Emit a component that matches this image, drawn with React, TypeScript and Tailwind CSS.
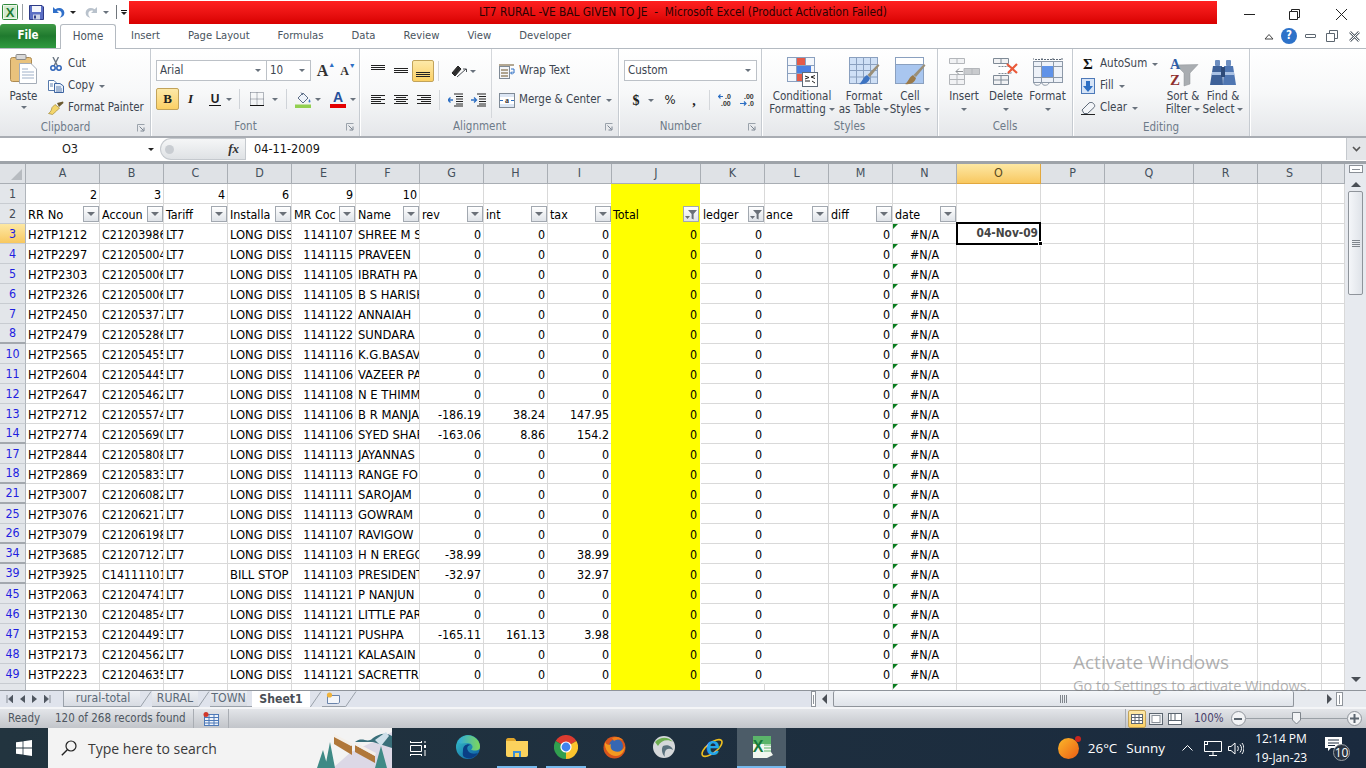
import type { ReactNode } from "react";

const GRID =
  "grid grid-cols-[26px_74px_64px_64px_64px_64px_64px_64px_64px_64px_89px_64px_64px_64px_64px_84px_64px_89px_64px_64px_23px]";

type Row = [number, string, string, string, string, string, string?, string?, string?];

const rows: Row[] = [
  [3, "H2TP1212", "C21203986", "LONG DISS", "1141107", "SHREE M S"],
  [4, "H2TP2297", "C21205004", "LONG DISS", "1141115", "PRAVEEN"],
  [5, "H2TP2303", "C21205006", "LONG DISS", "1141105", "IBRATH PA"],
  [6, "H2TP2326", "C21205006", "LONG DISS", "1141105", "B S HARISH"],
  [7, "H2TP2450", "C21205377", "LONG DISS", "1141122", "ANNAIAH"],
  [8, "H2TP2479", "C21205286", "LONG DISS", "1141122", "SUNDARA"],
  [10, "H2TP2565", "C21205455", "LONG DISS", "1141116", "K.G.BASAV"],
  [11, "H2TP2604", "C21205445", "LONG DISS", "1141106", "VAZEER PA"],
  [12, "H2TP2647", "C21205462", "LONG DISS", "1141108", "N E THIMM"],
  [13, "H2TP2712", "C21205574", "LONG DISS", "1141106", "B R MANJA", "-186.19", "38.24", "147.95"],
  [14, "H2TP2774", "C21205690", "LONG DISS", "1141106", "SYED SHAR", "-163.06", "8.86", "154.2"],
  [17, "H2TP2844", "C21205808", "LONG DISS", "1141113", "JAYANNAS"],
  [18, "H2TP2869", "C21205833", "LONG DISS", "1141113", "RANGE FO"],
  [21, "H2TP3007", "C21206082", "LONG DISS", "1141111", "SAROJAM"],
  [25, "H2TP3076", "C21206217", "LONG DISS", "1141113", "GOWRAM"],
  [26, "H2TP3079", "C21206198", "LONG DISS", "1141107", "RAVIGOW"],
  [34, "H2TP3685", "C21207127", "LONG DISS", "1141103", "H N EREGO", "-38.99", "0", "38.99"],
  [39, "H2TP3925", "C14111101", "BILL STOP", "1141103", "PRESIDENT", "-32.97", "0", "32.97"],
  [45, "H3TP2063", "C21204741", "LONG DISS", "1141121", "P NANJUN"],
  [46, "H3TP2130", "C21204854", "LONG DISS", "1141121", "LITTLE PAR"],
  [47, "H3TP2153", "C21204493", "LONG DISS", "1141121", "PUSHPA", "-165.11", "161.13", "3.98"],
  [48, "H3TP2173", "C21204562", "LONG DISS", "1141121", "KALASAIN"],
  [49, "H3TP2223", "C21204635", "LONG DISS", "1141121", "SACRETTR"],
];

const columns = ["A", "B", "C", "D", "E", "F", "G", "H", "I", "J", "K", "L", "M", "N", "O", "P", "Q", "R", "S", ""];

function Caret({ dark }: { dark?: boolean }) {
  return (
    <span
      className={
        dark
          ? "inline-block h-0 w-0 border-x-[3px] border-t-[3px] border-x-transparent border-t-[#222]"
          : "inline-block h-0 w-0 border-x-[3px] border-t-[3px] border-x-transparent border-t-[#69727d]"
      }
    />
  );
}

function Launcher() {
  return (
    <svg width="8" height="8" viewBox="0 0 8 8" className="shrink-0">
      <path d="M0.5 7.5V0.5H7.5" fill="none" stroke="#9aa2ab" />
      <path d="M2.5 2.5L6.5 6.5M7 3.5V7H3.5" fill="none" stroke="#7a8490" />
    </svg>
  );
}

function ExcelLogo({ size = 16 }: { size?: number }) {
  return (
    <svg width={size} height={size} viewBox="0 0 16 16">
      <rect x="0.5" y="0.5" width="15" height="15" rx="1" fill="#eef6ea" stroke="#2f8a3c" />
      <rect x="2" y="2" width="12" height="12" fill="#d3ead0" />
      <text x="8" y="13" textAnchor="middle" fontSize="13" fontWeight="700" fontFamily="Liberation Sans" fill="#1f7a32">X</text>
    </svg>
  );
}

function Save() {
  return (
    <svg width="15" height="15" viewBox="0 0 15 15">
      <path d="M0.5 0.5H13L14.5 2V14.5H0.5Z" fill="#5b6fc4" stroke="#2e3b86" />
      <rect x="3" y="1" width="9" height="6" fill="#f4f6fb" />
      <rect x="4" y="9.5" width="7" height="5" fill="#cdd3e6" />
      <rect x="5" y="10.5" width="2" height="3" fill="#2e3b86" />
    </svg>
  );
}

function UndoArrow({ color, flip }: { color: string; flip?: boolean }) {
  return (
    <svg width="13" height="13" viewBox="0 0 13 13" className={flip ? "-scale-x-100" : ""}>
      <path d="M1 1V7H7L4.8 4.9C6.6 3.8 9.2 4.6 9.6 7.2C9.9 9 9 10.6 7.6 11.6C10.7 11.4 12.6 9 12.3 6.2C11.9 2.5 7.4 0.6 3.3 3.3Z" fill={color} />
    </svg>
  );
}

function Paste() {
  return (
    <svg width="28" height="30" viewBox="0 0 28 30">
      <rect x="0.5" y="3.5" width="21" height="24" rx="2" fill="#e9c27c" stroke="#ad8a52" />
      <rect x="6" y="0.5" width="10" height="5" rx="1" fill="#d9d9d9" stroke="#8a8a8a" />
      <path d="M9.5 9.5H21L26.5 15V29.5H9.5Z" fill="#fff" stroke="#a5adb8" />
      <path d="M12 15H18M12 18H24M12 21H24M12 24H24" stroke="#9fb0c8" />
    </svg>
  );
}

function Scissors() {
  return (
    <svg width="12" height="14" viewBox="0 0 12 14">
      <path d="M3 0L7.5 9M8.5 0L4 9" stroke="#6b7683" strokeWidth="1.4" />
      <circle cx="3" cy="11" r="2.2" fill="none" stroke="#2d63b8" strokeWidth="1.5" />
      <circle cx="9" cy="11" r="2.2" fill="none" stroke="#2d63b8" strokeWidth="1.5" />
    </svg>
  );
}

function Copy() {
  return (
    <svg width="16" height="13" viewBox="0 0 16 13">
      <path d="M0.5 0.5H6L8.5 3V10.5H0.5Z" fill="#fff" stroke="#5579ac" />
      <path d="M6.5 3.5H12L15.5 6V12.5H6.5Z" fill="#e9f0fa" stroke="#3d64a0" />
      <path d="M2 4H5M2 6H5M8 7H13M8 9H14M8 11H14" stroke="#3d64a0" strokeWidth="0.8" />
    </svg>
  );
}

function Brush() {
  return (
    <svg width="16" height="14" viewBox="0 0 16 14">
      <path d="M9 2L15 0.5L15.5 2L11 6Z" fill="#6b5a30" />
      <path d="M7 3.5L11.5 7L8.5 10L4.5 13.5L0.5 12.5C3 11 3.5 8.5 4 6.5Z" fill="#f3d56b" stroke="#a48a38" strokeWidth="0.7" />
    </svg>
  );
}

function Lines({ rows, width = 14 }: { rows: [number, number, number][]; width?: number }) {
  return (
    <svg width={width} height="14" viewBox={`0 0 ${width} 14`}>
      {rows.map(([x, y, w]) => (
        <rect key={`${x}-${y}`} x={x} y={y} width={w} height="1" fill="#222" />
      ))}
    </svg>
  );
}

function AlignBtn({ active, children }: { active?: boolean; children: ReactNode }) {
  return (
    <div
      className={
        active
          ? "flex h-[22px] w-[22px] items-center justify-center rounded-[2px] border border-[#c2a35a] bg-gradient-to-b from-[#fde9a8] to-[#fbd063]"
          : "flex h-[22px] w-[23px] items-center justify-center"
      }
    >
      {children}
    </div>
  );
}

function Indent({ out }: { out?: boolean }) {
  return (
    <svg width="15" height="14" viewBox="0 0 15 14">
      <path d="M6 1H15M8 3.5H15M8 6H15M8 8.5H15M8 11H15M6 13H15" stroke="#222" />
      <path d={out ? "M0 7H5M2.5 4.5L0 7L2.5 9.5" : "M0 7H5M3 4.5L5.5 7L3 9.5"} stroke="#2d6fc4" strokeWidth="1.3" fill="none" />
    </svg>
  );
}

function Small({ icon, label, caret }: { icon: ReactNode; label: string; caret?: boolean }) {
  return (
    <div className="flex h-[22px] items-center">
      <div className="flex w-[18px] justify-center">{icon}</div>
      <span className="ml-[3px] whitespace-nowrap">{label}</span>
      {caret && (
        <span className="ml-[5px] flex">
          <Caret />
        </span>
      )}
    </div>
  );
}

function Large({ icon, lines, width, last }: { icon: ReactNode; lines: string[]; width: string; last?: boolean }) {
  return (
    <div className={`flex flex-col items-center pt-[6px] ${width}`}>
      <div className="flex h-[33px] items-center justify-center">{icon}</div>
      <div className="mt-[2px] whitespace-nowrap leading-[13px]">{lines[0]}</div>
      <div className="flex h-[13px] items-center whitespace-nowrap leading-[13px]">
        {lines[1] && <span>{lines[1]}</span>}
        {last && (
          <span className={lines[1] ? "ml-[3px] flex" : "flex"}>
            <Caret />
          </span>
        )}
      </div>
    </div>
  );
}

function Group({ width, label, launcher, children }: { width: string; label: string; launcher?: boolean; children: ReactNode }) {
  return (
    <div className={`flex shrink-0 flex-col border-r border-[#c6cbd1] shadow-[1px_0_0_#fff] ${width}`}>
      <div className="flex h-[70px]">{children}</div>
      <div className="flex h-[18px] items-center text-[#6d7a88]">
        <span className={launcher ? "mr-[6px] flex-1 text-center" : "flex-1 text-center"}>{label}</span>
        {launcher && <span className="mr-[5px] flex w-[8px]"><Launcher /></span>}
      </div>
    </div>
  );
}

function CondFormat() {
  return (
    <svg width="31" height="30" viewBox="0 0 31 30">
      <rect x="0.5" y="0.5" width="27" height="24" fill="#f3f6fb" stroke="#8aa0bf" />
      <path d="M9.5 0.5V24.5M18.5 0.5V24.5M0.5 8.5H27.5M0.5 16.5H27.5" stroke="#8aa0bf" />
      <rect x="10" y="1" width="8" height="7" fill="#e45a48" />
      <rect x="10" y="9" width="14" height="7" fill="#4a7fe0" />
      <rect x="10" y="17" width="8" height="7" fill="#e45a48" />
      <rect x="15.5" y="15.5" width="15" height="14" fill="#fff" stroke="#5e6a78" />
      <path d="M18 19L22 20.5L18 22M18 24H23M28 18.5L24 20L28 21.5M25 24L28 26" stroke="#222" fill="none" />
    </svg>
  );
}

function FormatTable() {
  return (
    <svg width="31" height="30" viewBox="0 0 31 30">
      <rect x="0.5" y="0.5" width="28" height="26" fill="#cfe0f6" stroke="#8aa0bf" />
      <path d="M7.5 0.5V26.5M14.5 0.5V26.5M21.5 0.5V26.5M0.5 7.5H28.5M0.5 13.5H28.5M0.5 20H28.5" stroke="#8aa0bf" />
      <path d="M29 7L30.5 8.5L21 20L18.5 18Z" fill="#9a8f78" />
      <path d="M18 18L21 21C20 25 16 28 10 27C13 25.5 14 20 18 18Z" fill="#3d74c2" />
    </svg>
  );
}

function CellStyles() {
  return (
    <svg width="31" height="30" viewBox="0 0 31 30">
      <rect x="0.5" y="0.5" width="28" height="26" fill="#fff" stroke="#8aa0bf" />
      <rect x="1" y="7" width="27" height="19" fill="#a9c6ef" />
      <path d="M0.5 7.5H28.5" stroke="#8aa0bf" />
      <path d="M29 7L30.5 8.5L21 20L18.5 18Z" fill="#9a8f78" />
      <path d="M18 18L21 21C20 25 16 28 10 27C13 25.5 14 20 18 18Z" fill="#9a7a4a" />
    </svg>
  );
}

function InsertIcon() {
  return (
    <svg width="31" height="28" viewBox="0 0 31 28">
      <path d="M0.5 0.5H15.5V5.5H0.5ZM8 0.5V5.5" fill="#f1f2f4" stroke="#b3b6ba" />
      <path d="M0.5 16.5H15.5V26.5H0.5ZM8 16.5V26.5M0.5 21.5H15.5" fill="#f1f2f4" stroke="#b3b6ba" />
      <path d="M15 10.5H30.5V16.5H15ZM23 10.5V16.5" fill="#c9cbce" stroke="#b3b6ba" />
      <path d="M7 13.5H14M10 10.5L7 13.5L10 16.5" fill="none" stroke="#8f9296" />
    </svg>
  );
}

function DeleteIcon() {
  return (
    <svg width="26" height="28" viewBox="0 0 26 28">
      <path d="M0.5 0.5H15.5V5.5H0.5ZM8 0.5V5.5" fill="#f1f2f4" stroke="#7f8a96" />
      <path d="M0.5 17.5H15.5V26.5H0.5ZM8 17.5V26.5M0.5 22H15.5" fill="#f1f2f4" stroke="#7f8a96" />
      <path d="M5.5 8.5H18V15.5H5.5" fill="#fff" stroke="#7f8a96" strokeDasharray="2 1" />
      <path d="M14 6L24 15M24 6L15 15" stroke="#ea5a3a" strokeWidth="2.2" />
    </svg>
  );
}

function FormatIcon() {
  return (
    <svg width="30" height="30" viewBox="0 0 30 30">
      <path d="M0 1V4M9 1V4M20 1V4M29 1V4M2 2.5H28" stroke="#5e6a78" strokeDasharray="2 1" />
      <rect x="0.5" y="4.5" width="29" height="21" fill="#eef2f8" stroke="#8d99a8" />
      <path d="M8.5 4.5V25.5M20.5 4.5V25.5M0.5 9.5H29.5M0.5 20.5H29.5" stroke="#8d99a8" />
      <rect x="9" y="9" width="11" height="11" fill="#5f92e8" />
      <path d="M1 26C1 29 7 29 8 26M9 26C9 29 15 29 16 26" fill="none" stroke="#8d99a8" />
    </svg>
  );
}

function SortIcon() {
  return (
    <svg width="31" height="30" viewBox="0 0 31 30">
      <path d="M8 8L30 7.5L22 16V27L16 29V16Z" fill="#a9adb1" stroke="#8e9296" strokeWidth="0.5" />
      <text x="7" y="12" textAnchor="middle" fontSize="14" fontWeight="700" fontFamily="Liberation Serif" fill="#2f5ea8">A</text>
      <text x="7" y="28" textAnchor="middle" fontSize="15" fontWeight="700" fontFamily="Liberation Serif" fill="#8e2f2f">Z</text>
    </svg>
  );
}

function FindIcon() {
  return (
    <svg width="28" height="26" viewBox="0 0 28 26">
      <rect x="6" y="1" width="5" height="6" rx="1" fill="#6d8ec0" />
      <rect x="17" y="1" width="5" height="6" rx="1" fill="#6d8ec0" />
      <path d="M4 7H13L14 26H1Z" fill="#3e6198" />
      <path d="M15 7H24L27 26H14Z" fill="#4f76b2" />
      <rect x="3" y="13" width="22" height="3" fill="#a9c1e4" />
      <rect x="12" y="8" width="4" height="10" fill="#2e4a78" />
    </svg>
  );
}

function Ribbon() {
  return (
    <div className="flex h-[89px] shrink-0 border-b-2 border-[#a9adb3] bg-gradient-to-b from-white via-[#f7f8f9] to-[#e5e7ea] text-[#3c4550]">
      <Group width="w-[151px]" label="Clipboard" launcher>
        <div className="flex w-[47px] flex-col items-center pt-[5px]">
          <div className="flex h-[31px] items-start"><Paste /></div>
          <div className="mt-[4px] leading-[14px]">Paste</div>
          <div className="mt-[3px] flex"><Caret /></div>
        </div>
        <div className="flex flex-col pt-[4px]">
          <Small icon={<Scissors />} label="Cut" />
          <Small icon={<Copy />} label="Copy" caret />
          <Small icon={<Brush />} label="Format Painter" />
        </div>
      </Group>

      <Group width="w-[209px]" label="Font" launcher>
        <div className="flex flex-col pl-[5px] pt-[11px]">
          <div className="flex h-[21px] items-center">
            <div className="flex h-[21px] w-[111px] items-center justify-between border border-[#bcc1c7] bg-white pl-[3px] pr-[5px]">
              <span>Arial</span>
              <Caret />
            </div>
            <div className="flex h-[21px] w-[44px] items-center justify-between border border-l-0 border-[#bcc1c7] bg-white pl-[3px] pr-[5px]">
              <span>10</span>
              <Caret />
            </div>
            <div className="ml-[4px] flex w-[22px] items-start justify-center font-['Liberation_Serif',serif] text-[16px] font-bold leading-[16px] text-[#333]">
              A<span className="mt-[-1px] text-[7px] leading-[7px] text-[#2d6fc4]">▲</span>
            </div>
            <div className="ml-[1px] flex w-[20px] items-start justify-center font-['Liberation_Serif',serif] text-[12px] font-bold leading-[16px] text-[#333]">
              A<span className="text-[7px] leading-[7px] text-[#2d6fc4]">▼</span>
            </div>
          </div>
          <div className="mt-[7px] flex h-[22px] items-center">
            <div className="flex h-[22px] w-[23px] items-center justify-center rounded-[2px] border border-[#c2a35a] bg-gradient-to-b from-[#fde9a8] to-[#fbd063] font-['Liberation_Serif',serif] text-[13px] font-bold text-[#222]">B</div>
            <div className="ml-[6px] w-[11px] text-center font-['Liberation_Serif',serif] text-[13px] font-bold italic text-[#222]">I</div>
            <div className="ml-[13px] w-[12px] border-b border-[#111] text-center font-['Liberation_Sans',sans-serif] text-[12px] font-bold leading-[12px] text-[#222]">U</div>
            <span className="ml-[5px] flex"><Caret /></span>
            <div className="ml-[7px] h-[20px] border-l border-[#cfd3d8]" />
            <svg width="14" height="14" viewBox="0 0 14 14" className="ml-[10px]">
              <path d="M0.5 0.5H13.5V13M0.5 0.5V13M7 0.5V13M0.5 7H13.5" fill="none" stroke="#6c7480" strokeDasharray="1 1" />
              <path d="M0 13.5H14" stroke="#111" />
            </svg>
            <span className="ml-[8px] flex"><Caret /></span>
            <div className="ml-[8px] h-[20px] border-l border-[#cfd3d8]" />
            <svg width="17" height="17" viewBox="0 0 17 17" className="ml-[8px]">
              <path d="M3 7L8 2L13 7L8 12Z" fill="#eef3fa" stroke="#5e6f88" />
              <path d="M6 1.5L8 4" stroke="#5e6f88" />
              <path d="M14.5 8C15.8 10 15.8 11.5 14.5 11.5C13.2 11.5 13.2 10 14.5 8Z" fill="#3f78c8" />
              <rect x="0" y="13.5" width="16" height="3.5" fill="#92d050" />
            </svg>
            <span className="ml-[3px] flex"><Caret /></span>
            <div className="ml-[9px] flex w-[16px] flex-col items-center">
              <span className="font-['Liberation_Sans',sans-serif] text-[14px] font-bold leading-[14px] text-[#27509b]">A</span>
              <span className="h-[4px] w-[16px] bg-[#e40000]" />
            </div>
            <span className="ml-[4px] flex"><Caret /></span>
          </div>
        </div>
      </Group>

      <Group width="w-[259px]" label="Alignment" launcher>
        <div className="flex w-[132px] flex-col border-r border-[#d4d7db] pl-[6px] pt-[11px]">
          <div className="flex h-[22px] items-center">
            <AlignBtn><Lines rows={[[0, 1, 14], [0, 3, 14], [0, 5, 14]]} /></AlignBtn>
            <AlignBtn><Lines rows={[[0, 4, 14], [0, 6, 14], [0, 8, 14]]} /></AlignBtn>
            <AlignBtn active><Lines rows={[[0, 8, 14], [0, 10, 14], [0, 12, 14]]} /></AlignBtn>
            <div className="ml-[4px] h-[20px] border-l border-[#d4d7db]" />
            <svg width="17" height="14" viewBox="0 0 17 14" className="ml-[12px]">
              <path d="M1 9L7 2L10 5L4 12ZM3 10L8 4" fill="#333" stroke="#222" />
              <path d="M6 13L15 5M12 5H15.5V8" fill="none" stroke="#4a4f55" />
            </svg>
            <span className="ml-[2px] flex"><Caret /></span>
          </div>
          <div className="mt-[7px] flex h-[22px] items-center">
            <AlignBtn><Lines rows={[[0, 2, 14], [0, 4, 10], [0, 6, 14], [0, 8, 10], [0, 10, 14]]} /></AlignBtn>
            <AlignBtn><Lines rows={[[0, 2, 14], [2, 4, 10], [0, 6, 14], [2, 8, 10], [0, 10, 14]]} /></AlignBtn>
            <AlignBtn><Lines rows={[[0, 2, 14], [4, 4, 10], [0, 6, 14], [4, 8, 10], [0, 10, 14]]} /></AlignBtn>
            <div className="ml-[4px] h-[20px] border-l border-[#d4d7db]" />
            <span className="ml-[8px] flex"><Indent out /></span>
            <span className="ml-[8px] flex"><Indent /></span>
          </div>
        </div>
        <div className="flex flex-col pl-[7px] pt-[11px]">
          <div className="flex h-[22px] items-center">
            <svg width="16" height="15" viewBox="0 0 16 15">
              <rect x="0.5" y="2.5" width="10" height="12" fill="#f4f6f9" stroke="#7f8a96" />
              <path d="M0 1H15M2 6H9M2 9H9M2 12H9" stroke="#6a5326" />
              <path d="M12 5H15V9H12M13 7.5L11.5 9L13 10.5" fill="none" stroke="#2d6fc4" />
            </svg>
            <span className="ml-[4px] whitespace-nowrap">Wrap Text</span>
          </div>
          <div className="mt-[7px] flex h-[22px] items-center">
            <svg width="16" height="15" viewBox="0 0 16 15">
              <rect x="0.5" y="0.5" width="15" height="14" fill="#dce6f4" stroke="#7f8a96" />
              <rect x="1" y="4" width="14" height="7" fill="#fff" />
              <text x="8" y="10" textAnchor="middle" fontSize="8" fontWeight="700" fontFamily="Liberation Serif" fill="#333">a</text>
              <path d="M1 7.5H4M12 7.5H15" stroke="#2d6fc4" />
            </svg>
            <span className="ml-[4px] whitespace-nowrap">Merge &amp; Center</span>
            <span className="ml-[5px] flex"><Caret /></span>
          </div>
        </div>
      </Group>

      <Group width="w-[143px]" label="Number" launcher>
        <div className="flex flex-col pl-[5px] pt-[11px]">
          <div className="flex h-[21px] w-[133px] items-center justify-between border border-[#bcc1c7] bg-white pl-[3px] pr-[5px]">
            <span>Custom</span>
            <Caret />
          </div>
          <div className="mt-[8px] flex h-[22px] items-center text-[#222]">
            <span className="ml-[6px] w-[12px] text-center font-['Liberation_Serif',serif] text-[14px] font-bold">$</span>
            <span className="ml-[6px] flex"><Caret /></span>
            <span className="ml-[9px] w-[14px] text-center text-[13px]">%</span>
            <span className="ml-[14px] w-[6px] text-center font-['Liberation_Serif',serif] text-[14px] font-bold">,</span>
            <div className="ml-[12px] h-[20px] border-l border-[#d4d7db]" />
            <svg width="17" height="14" viewBox="0 0 17 14" className="ml-[8px]">
              <path d="M0 3.5H5M2.5 1.5L0.5 3.5L2.5 5.5" fill="none" stroke="#2d6fc4" strokeWidth="1.2" />
              <text x="7" y="6" fontSize="7" fontWeight="700" fontFamily="Liberation Sans" fill="#333">.0</text>
              <text x="3" y="13" fontSize="7" fontWeight="700" fontFamily="Liberation Sans" fill="#333">.00</text>
            </svg>
            <svg width="17" height="14" viewBox="0 0 17 14" className="ml-[5px]">
              <text x="4" y="6" fontSize="7" fontWeight="700" fontFamily="Liberation Sans" fill="#333">.00</text>
              <path d="M0 10.5H6M4 8.5L6 10.5L4 12.5" fill="none" stroke="#2d6fc4" strokeWidth="1.2" />
              <text x="8" y="13" fontSize="7" fontWeight="700" fontFamily="Liberation Sans" fill="#333">.0</text>
            </svg>
          </div>
        </div>
      </Group>

      <Group width="w-[176px]" label="Styles">
        <Large width="w-[80px]" icon={<CondFormat />} lines={["Conditional", "Formatting"]} last />
        <Large width="w-[44px]" icon={<FormatTable />} lines={["Format", "as Table"]} last />
        <Large width="w-[48px]" icon={<CellStyles />} lines={["Cell", "Styles"]} last />
      </Group>

      <Group width="w-[135px]" label="Cells">
        <div className="w-[5px]" />
        <Large width="w-[42px]" icon={<InsertIcon />} lines={["Insert"]} last />
        <Large width="w-[42px]" icon={<DeleteIcon />} lines={["Delete"]} last />
        <Large width="w-[41px]" icon={<FormatIcon />} lines={["Format"]} last />
      </Group>

      <Group width="w-[177px]" label="Editing">
        <div className="flex w-[90px] flex-col pl-[6px] pt-[4px]">
          <Small icon={<span className="font-['Liberation_Serif',serif] text-[15px] font-bold leading-[15px] text-[#111]">Σ</span>} label="AutoSum" caret />
          <Small
            icon={
              <svg width="14" height="16" viewBox="0 0 14 16">
                <rect x="0.5" y="0.5" width="13" height="15" fill="#d6e4f7" stroke="#4d79b8" />
                <path d="M5 3H9V8H12L7 14L2 8H5Z" fill="#2d6fc4" />
              </svg>
            }
            label="Fill"
            caret
          />
          <Small
            icon={
              <svg width="15" height="13" viewBox="0 0 15 13">
                <path d="M1 8L8 1C9 0 11 0 12.5 1.5C14 3 14 4.5 13 5.5L6.5 11.5H3Z" fill="#f3f5f8" stroke="#5e6a78" />
                <path d="M0 12.5H14" stroke="#222" />
              </svg>
            }
            label="Clear"
            caret
          />
        </div>
        <Large width="w-[40px]" icon={<SortIcon />} lines={["Sort &", "Filter"]} last />
        <Large width="w-[40px]" icon={<FindIcon />} lines={["Find &", "Select"]} last />
      </Group>
    </div>
  );
}

function TitleBar() {
  return (
    <div className="flex h-[24px] shrink-0 bg-white">
      <div className="flex w-[129px] shrink-0 items-center pl-[2px]">
        <ExcelLogo />
        <div className="ml-[4px] h-[16px] border-l border-[#9aa0a6]" />
        <span className="ml-[6px] flex"><Save /></span>
        <span className="ml-[8px] flex"><UndoArrow color="#2f6fc9" /></span>
        <span className="ml-[5px] flex"><Caret dark /></span>
        <span className="ml-[9px] flex"><UndoArrow color="#b9c2cc" flip /></span>
        <span className="ml-[5px] flex"><Caret /></span>
        <div className="ml-[7px] h-[14px] border-l border-[#70767c]" />
        <div className="ml-[4px] flex flex-col items-center gap-[1px]">
          <span className="h-[1px] w-[6px] bg-[#111]" />
          <Caret dark />
        </div>
      </div>
      <div className="mt-[1px] flex h-[23px] w-[1088px] shrink-0 items-center justify-center bg-gradient-to-b from-[#ff2020] to-[#d80000] pl-[20px] text-[11.8px] text-[#2a0303]">
        <span className="whitespace-pre">LT7 RURAL -VE BAL GIVEN TO JE  -  Microsoft Excel (Product Activation Failed)</span>
      </div>
      <div className="flex flex-1 items-center pl-[27px] pt-[4px]">
        <span className="h-[1px] w-[11px] bg-[#222]" />
        <svg width="11" height="11" viewBox="0 0 11 11" className="ml-[34px]">
          <path d="M0.5 2.5H8.5V10.5H0.5ZM2.5 2.5V0.5H10.5V8.5H8.5" fill="none" stroke="#222" />
        </svg>
        <svg width="13" height="13" viewBox="0 0 13 13" className="ml-[35px]">
          <path d="M1 1L12 12M12 1L1 12" stroke="#222" />
        </svg>
      </div>
    </div>
  );
}

function MenuTabs() {
  return (
    <div className="flex h-[25px] shrink-0 items-end border-b border-[#b4bac1] bg-white text-[#4a5560]">
      <div className="ml-[0px] flex h-[24px] w-[56px] items-center justify-center rounded-t-[3px] bg-gradient-to-b from-[#3f9a46] via-[#1f7a2e] to-[#2f9a40] font-bold text-white">File</div>
      <div className="relative top-[1px] ml-[4px] flex h-[25px] w-[56px] items-center justify-center rounded-t-[3px] border border-b-0 border-[#b4bac1] bg-white">Home</div>
      <div className="ml-[15px] flex h-[24px] items-center gap-[28px] whitespace-nowrap text-[11.2px]">
        <span>Insert</span>
        <span>Page Layout</span>
        <span>Formulas</span>
        <span>Data</span>
        <span>Review</span>
        <span>View</span>
        <span>Developer</span>
      </div>
      <div className="ml-auto flex h-[24px] items-center">
        <svg width="10" height="7" viewBox="0 0 10 7"><path d="M1 6L5 1.5L9 6H1Z" fill="none" stroke="#444" /></svg>
        <div className="ml-[7px] flex h-[16px] w-[16px] items-center justify-center rounded-full bg-[#2d72c9] font-bold text-white">?</div>
        <span className="ml-[8px] h-[4px] w-[11px] rounded-[1px] border border-[#5c6670]" />
        <svg width="12" height="12" viewBox="0 0 12 12" className="ml-[10px]">
          <path d="M0.5 3.5H8.5V11.5H0.5ZM3.5 3.5V0.5H11.5V8.5H8.5" fill="#fff" stroke="#5c6670" />
        </svg>
        <svg width="11" height="11" viewBox="0 0 11 11" className="ml-[11px] mr-[6px]">
          <path d="M1 1L10 10M10 1L1 10" stroke="#5c6670" strokeWidth="2.5" />
          <path d="M1 1L10 10M10 1L1 10" stroke="#fff" />
        </svg>
      </div>
    </div>
  );
}

function FormulaBar() {
  return (
    <div className="flex h-[25px] shrink-0 border-b-2 border-[#9ea3a9] bg-white text-[12.6px]">
      <div className="flex h-[22px] w-[160px] shrink-0 items-center pl-[6px] pr-[6px]">
        <span className="flex-1 pr-[14px] text-center text-[#222]">O3</span>
        <Caret dark />
      </div>
      <div className="flex h-[22px] w-[85px] shrink-0 items-center justify-between rounded-l-[11px] border-y border-l border-[#c5c9ce] bg-gradient-to-b from-[#f5f6f7] to-[#dfe2e5] pl-[4px] pr-[6px]">
        <span className="h-[9px] w-[9px] rounded-full bg-[#c9cdd2]" />
        <span className="font-['Liberation_Serif',serif] text-[13px] font-bold italic leading-[14px] text-[#333]">fx</span>
      </div>
      <div className="flex h-[22px] flex-1 items-center border-l border-[#c5c9ce] pl-[8px] text-[#111]">04-11-2009</div>
      <div className="flex h-[22px] w-[20px] shrink-0 items-center justify-center border-l border-[#c5c9ce] bg-[#e4e6e9]">
        <svg width="9" height="6" viewBox="0 0 9 6"><path d="M1 1L4.5 4.5L8 1" fill="none" stroke="#555" strokeWidth="1.6" /></svg>
      </div>
    </div>
  );
}

function Cell({ children, className = "" }: { children?: ReactNode; className?: string }) {
  return (
    <div className={`relative h-[20px] overflow-hidden whitespace-nowrap border-b border-r border-[#d9d9d9] pl-[2px] pr-[2px] leading-[21px] text-black ${className}`}>
      {children}
    </div>
  );
}

function FilterBtn({ active }: { active?: boolean }) {
  return (
    <div className="absolute right-[0px] top-[2px] flex h-[16px] w-[16px] items-center justify-center border border-[#a2a8b0] bg-gradient-to-b from-white to-[#dfe3e8]">
      {active ? (
        <svg width="12" height="11" viewBox="0 0 12 11">
          <path d="M3 1H12L8.6 5V10.5L6.6 9.5V5Z" fill="#6a7078" />
          <path d="M0 7H5L2.5 10Z" fill="#6a7078" />
        </svg>
      ) : (
        <span className="flex"><span className="h-0 w-0 border-x-[4px] border-t-[4px] border-x-transparent border-t-[#6a7078]" /></span>
      )}
    </div>
  );
}

function RowHead({ children, selected, gap, blue }: { children?: ReactNode; selected?: boolean; gap?: boolean; blue?: boolean }) {
  return (
    <div
      className={`flex h-[20px] items-center justify-center border-r border-[#b0b5bb] pt-[1px] ${
        selected ? "bg-gradient-to-b from-[#fde8a3] to-[#f8c85f]" : "bg-[#e3e6ea]"
      } ${gap ? "border-b-2 border-b-[#a3a8ae]" : "border-b border-b-[#c8ccd1]"} ${blue ? "text-[#1f1fe0]" : "text-[#444c56]"}`}
    >
      {children}
    </div>
  );
}

function ErrorTriangle() {
  return <span className="absolute left-0 top-0 h-0 w-0 border-r-[5px] border-t-[5px] border-r-transparent border-t-[#0a7d1e]" />;
}

function Sheet() {
  return (
    <div className="flex h-[527px] shrink-0 overflow-hidden bg-white text-[12.4px]">
      <div className="w-[1345px] shrink-0">
        <div className={`${GRID} h-[21px] border-t border-[#9ea3a9]`}>
          <div className="flex items-end justify-end border-b border-r border-[#a9aeb4] bg-[#dfe2e6] pb-[3px] pr-[3px]">
            <span className="h-0 w-0 border-b-[11px] border-l-[11px] border-b-[#b7bbc0] border-l-transparent" />
          </div>
          {columns.map((c) => (
            <div
              key={c}
              className={
                c === "O"
                  ? "flex items-center justify-center border-b border-r border-[#e2a83e] bg-gradient-to-b from-[#fde8a3] to-[#f8c85f] text-[#5a4a1e]"
                  : "flex items-center justify-center border-b border-r border-[#a9aeb4] bg-[#dfe2e6] text-[#45505c]"
              }
            >
              {c}
            </div>
          ))}
        </div>

        <div className={GRID}>
          <RowHead>1</RowHead>
          {["2", "3", "4", "6", "9", "10"].map((v) => (
            <Cell key={v} className="text-right">{v}</Cell>
          ))}
          <Cell /><Cell /><Cell />
          <Cell className="left-[-1px] border-[#ffff00]! bg-[#ffff00]" />
          <Cell /><Cell /><Cell /><Cell /><Cell /><Cell /><Cell /><Cell /><Cell /><Cell />
        </div>

        <div className={GRID}>
          <RowHead>2</RowHead>
          <Cell className="text-[12.8px]">RR No<FilterBtn /></Cell>
          <Cell>Accoun<FilterBtn /></Cell>
          <Cell>Tariff<FilterBtn /></Cell>
          <Cell>Installa<FilterBtn /></Cell>
          <Cell>MR Coc<FilterBtn /></Cell>
          <Cell>Name<FilterBtn /></Cell>
          <Cell>rev<FilterBtn /></Cell>
          <Cell>int<FilterBtn /></Cell>
          <Cell>tax<FilterBtn /></Cell>
          <Cell className="left-[-1px] border-[#ffff00]! bg-[#ffff00]">Total<FilterBtn active /></Cell>
          <Cell>ledger<FilterBtn active /></Cell>
          <Cell><span className="ml-[-1px]">ance</span><FilterBtn /></Cell>
          <Cell>diff<FilterBtn /></Cell>
          <Cell>date<FilterBtn /></Cell>
          <Cell /><Cell /><Cell /><Cell /><Cell /><Cell />
        </div>

        {rows.map((r, i) => {
          const next = rows[i + 1];
          const gap = !!next && next[0] !== r[0] + 1;
          return (
            <div key={r[0]} className={GRID}>
              <RowHead selected={r[0] === 3} gap={gap} blue>{r[0]}</RowHead>
              <Cell className="text-[12.8px]">{r[1]}</Cell>
              <Cell>{r[2]}</Cell>
              <Cell>LT7</Cell>
              <Cell className="text-[12.9px]">{r[3]}</Cell>
              <Cell className="text-right">{r[4]}</Cell>
              <Cell className="text-[12.9px]">{r[5]}</Cell>
              <Cell className="text-right">{r[6] ?? "0"}</Cell>
              <Cell className="text-right">{r[7] ?? "0"}</Cell>
              <Cell className="text-right">{r[8] ?? "0"}</Cell>
              <Cell className="left-[-1px] border-[#ffff00]! bg-[#ffff00] text-right">0</Cell>
              <Cell className="border-r-white text-right">0</Cell>
              <Cell />
              <Cell className="text-right">0</Cell>
              <Cell className="text-center"><ErrorTriangle />#N/A</Cell>
              {r[0] === 3 ? (
                <div className="relative z-10 h-[20px]">
                  <div className="absolute left-[-1px] top-[-2px] flex h-[23px] w-[85px] items-center justify-end border-2 border-black pr-[1px] text-[11.8px] font-bold text-[#444]">
                    04-Nov-09
                  </div>
                  <span className="absolute left-[81px] top-[17px] h-[5px] w-[5px] border border-white bg-black" />
                </div>
              ) : (
                <Cell />
              )}
              <Cell /><Cell /><Cell /><Cell /><Cell />
            </div>
          );
        })}

        <div className={GRID}>
          <RowHead />
          <Cell /><Cell /><Cell /><Cell /><Cell /><Cell /><Cell /><Cell /><Cell />
          <Cell className="left-[-1px] border-[#ffff00]! bg-[#ffff00]" />
          <Cell /><Cell /><Cell />
          <Cell className="text-center"><ErrorTriangle />#N/A</Cell>
          <Cell /><Cell /><Cell /><Cell /><Cell /><Cell />
        </div>
      </div>

      <div className="flex flex-1 flex-col items-center border-t border-[#9ea3a9] bg-[#e7eaef]">
        <div className="mt-[1px] flex h-[8px] w-[14px] items-center justify-center border border-[#8b9097] bg-white">
          <span className="h-[1px] w-[8px] bg-[#8b9097]" />
        </div>
        <div className="mt-[4px] flex h-[14px] items-center">
          <span className="h-0 w-0 border-x-[5px] border-b-[5px] border-x-transparent border-b-[#4a4f56]" />
        </div>
        <div className="flex h-[104px] w-[15px] shrink-0 flex-col items-center justify-center gap-[1px] rounded-[2px] border border-[#8f949b] bg-gradient-to-r from-[#f4f6f9] to-[#dfe3e9]">
          <span className="h-[1px] w-[8px] bg-[#7f858c]" />
          <span className="h-[1px] w-[8px] bg-[#7f858c]" />
          <span className="h-[1px] w-[8px] bg-[#7f858c]" />
          <span className="h-[1px] w-[8px] bg-[#7f858c]" />
        </div>
        <div className="mt-auto mb-[6px] flex h-[10px] items-center">
          <span className="h-0 w-0 border-x-[5px] border-t-[5px] border-x-transparent border-t-[#4a4f56]" />
        </div>
      </div>
    </div>
  );
}

function TabSlash() {
  return (
    <svg width="12" height="17" viewBox="0 0 12 17" className="shrink-0">
      <path d="M0 16.5L11 0.5" stroke="#9aa1aa" fill="none" />
    </svg>
  );
}

function SheetTabs() {
  return (
    <div className="flex h-[17px] shrink-0 items-stretch border-t border-[#8f949b] bg-[#dfe3ec] text-[12.2px] text-[#5c6a78]">
      <div className="flex w-[63px] shrink-0 items-center gap-[7px] pl-[6px]">
        <svg width="7" height="8" viewBox="0 0 7 8"><path d="M1 0V8M7 0L2.5 4L7 8Z" fill="#4f5660" stroke="#4f5660" strokeWidth="0.6" /></svg>
        <svg width="5" height="8" viewBox="0 0 5 8"><path d="M5 0L0 4L5 8Z" fill="#4f5660" /></svg>
        <svg width="5" height="8" viewBox="0 0 5 8"><path d="M0 0L5 4L0 8Z" fill="#4f5660" /></svg>
        <svg width="7" height="8" viewBox="0 0 7 8"><path d="M6 0V8M0 0L4.5 4L0 8Z" fill="#4f5660" stroke="#4f5660" strokeWidth="0.6" /></svg>
      </div>
      <div className="flex w-[77px] shrink-0 items-center justify-center border-b border-l border-[#9aa1aa] bg-gradient-to-b from-[#eef0f4] to-[#d7dbe2] pl-[2px] leading-[15px]">rural-total</div>
      <TabSlash />
      <div className="flex w-[46px] shrink-0 items-center justify-center border-b border-[#9aa1aa] bg-gradient-to-b from-[#eef0f4] to-[#d7dbe2] leading-[15px]">RURAL</div>
      <TabSlash />
      <div className="flex w-[37px] shrink-0 items-center justify-center border-b border-[#9aa1aa] bg-gradient-to-b from-[#eef0f4] to-[#d7dbe2] leading-[15px]">TOWN</div>
      <div className="flex w-[5px] shrink-0 border-b border-[#9aa1aa]" />
      <div className="flex w-[58px] shrink-0 items-center justify-center bg-white font-bold leading-[15px] text-[#4a4f56]">Sheet1</div>
      <TabSlash />
      <div className="flex w-[23px] shrink-0 items-center justify-center border-b border-[#9aa1aa]">
        <svg width="15" height="13" viewBox="0 0 15 13">
          <path d="M1.5 3.5H13.5V10C13.5 11 12.5 11.5 11.5 11.5H1.5Z" fill="#f4f6fa" stroke="#6a84ab" />
          <circle cx="3.5" cy="3" r="2.6" fill="#f0b33c" />
        </svg>
      </div>
      <TabSlash />
      <div className="w-[454px] shrink-0" />
      <div className="flex w-[5px] shrink-0 items-center justify-center border border-[#8f949b] bg-white">
        <span className="h-[9px] w-[1px] bg-[#8f949b]" />
      </div>
      <div className="flex w-[17px] shrink-0 items-center justify-center bg-[#e7eaef]">
        <span className="h-0 w-0 border-y-[5px] border-r-[5px] border-y-transparent border-r-[#4a4f56]" />
      </div>
      <div className="flex w-[461px] shrink-0 items-center justify-center gap-[1px] rounded-[2px] border-x border-b border-[#8f949b] bg-gradient-to-b from-[#f4f6f9] to-[#dfe3e9]">
        <span className="h-[8px] w-[1px] bg-[#7f858c]" />
        <span className="h-[8px] w-[1px] bg-[#7f858c]" />
        <span className="h-[8px] w-[1px] bg-[#7f858c]" />
        <span className="h-[8px] w-[1px] bg-[#7f858c]" />
      </div>
      <div className="flex flex-1 items-center bg-[#e7eaef] pl-[33px]">
        <span className="h-0 w-0 border-y-[5px] border-l-[5px] border-y-transparent border-l-[#4a4f56]" />
        <span className="ml-[4px] flex h-[14px] w-[7px] items-center justify-center border border-[#8f949b] bg-white">
          <span className="h-[9px] w-[1px] bg-[#8f949b]" />
        </span>
      </div>
    </div>
  );
}

function StatusBar() {
  return (
    <div className="flex h-[21px] shrink-0 items-center border-t-2 border-[#f4f5f7] bg-gradient-to-b from-[#e3e5e9] to-[#c2c5ca] text-[#4d5660]">
      <span className="ml-[8px] w-[47px] shrink-0">Ready</span>
      <span className="w-[138px] shrink-0 whitespace-nowrap">120 of 268 records found</span>
      <div className="h-[19px] border-l border-[#a9adb3]" />
      <svg width="16" height="14" viewBox="0 0 16 14" className="ml-[9px]">
        <rect x="1.5" y="2.5" width="14" height="11" fill="#eef3fa" stroke="#4d79b8" />
        <path d="M1.5 5.5H15.5M1.5 8.5H15.5M1.5 11H15.5M6 3V13M11 3V13" stroke="#4d79b8" />
        <circle cx="3" cy="2.5" r="2.5" fill="#d2372a" />
      </svg>
      <div className="ml-[9px] h-[19px] border-l border-[#a9adb3]" />
      <div className="ml-[896px] flex h-[19px] items-center border-l border-[#a9adb3] pl-[2px]">
        <div className="flex h-[18px] w-[18px] items-center justify-center rounded-[2px] border border-[#c2a35a] bg-gradient-to-b from-[#fde9a8] to-[#fbd063]">
          <svg width="12" height="10" viewBox="0 0 12 10">
            <rect x="0.5" y="0.5" width="11" height="9" fill="#fff" stroke="#5c6670" />
            <path d="M4 0.5V9.5M8 0.5V9.5M0.5 3.5H11.5M0.5 6.5H11.5" stroke="#5c6670" />
          </svg>
        </div>
        <svg width="14" height="12" viewBox="0 0 14 12" className="ml-[3px]">
          <rect x="0.5" y="0.5" width="13" height="11" fill="#eceef1" stroke="#5c6670" />
          <rect x="3" y="2.5" width="8" height="7" fill="#fff" stroke="#8b929a" />
        </svg>
        <svg width="14" height="12" viewBox="0 0 14 12" className="ml-[5px]">
          <rect x="0.5" y="0.5" width="13" height="11" fill="#fff" stroke="#5c6670" />
          <path d="M7 0.5V7M3 0.5V7M0.5 7.5H13.5" stroke="#5c6670" />
        </svg>
      </div>
      <span className="ml-[12px] text-[#47406a]">100%</span>
      <div className="ml-[7px] flex h-[15px] w-[15px] items-center justify-center rounded-full border border-[#8f949b] bg-[#f2f3f5]">
        <span className="h-[2px] w-[8px] bg-[#5c6670]" />
      </div>
      <div className="flex h-[1px] w-[101px] justify-center bg-[#9aa0a6]">
        <svg width="9" height="13" viewBox="0 0 9 13" className="mt-[-6px] shrink-0">
          <path d="M0.5 0.5H8.5V8L4.5 12L0.5 8Z" fill="#f2f3f5" stroke="#7f858c" />
        </svg>
      </div>
      <div className="flex h-[15px] w-[15px] items-center justify-center rounded-full border border-[#8f949b] bg-[#f2f3f5]">
        <svg width="9" height="9" viewBox="0 0 9 9"><path d="M4.5 0V9M0 4.5H9" stroke="#5c6670" strokeWidth="2" /></svg>
      </div>
    </div>
  );
}

function Scenery() {
  return (
    <svg width="77" height="40" viewBox="0 0 77 40" className="shrink-0">
      <path d="M18 40L36 24L58 14L77 4V40Z" fill="#dcd8e6" />
      <path d="M40 14C48 8 52 16 58 10C64 6 70 4 77 8V20L58 14Z" fill="#3a6f7a" />
      <path d="M60 12L71 4L74 8L66 18Z" fill="#cfe0ea" />
      <path d="M19 8L37 18V27L19 16Z" fill="#b0773a" />
      <path d="M19 6L37 15L36 18L19 9Z" fill="#f4efe9" />
      <path d="M40 17L60 28V35L40 24Z" fill="#b0773a" />
      <path d="M40 14L61 25L60 28L40 17Z" fill="#f4efe9" />
      <path d="M10 40L15 14L20 40ZM2 40L8 22L13 40ZM60 40L66 18L72 40Z" fill="#3f8a86" />
    </svg>
  );
}

function TaskButton({ children, underline, active }: { children: ReactNode; underline?: boolean; active?: boolean }) {
  return (
    <div className={active ? "flex h-[40px] w-[49px] shrink-0 flex-col items-center bg-[#4c5c68]" : "flex h-[40px] w-[49px] shrink-0 flex-col items-center"}>
      <div className="flex flex-1 items-center justify-center">{children}</div>
      <span className={active ? "h-[2px] w-full bg-[#76b9ed]" : underline ? "h-[2px] w-[40px] bg-[#76b9ed]" : "h-[2px]"} />
    </div>
  );
}

function Taskbar() {
  return (
    <div className="flex h-[40px] flex-1 items-stretch bg-gradient-to-r from-[#22343f] to-[#1a2a3e] text-white">
      <div className="flex w-[48px] shrink-0 items-center justify-center">
        <svg width="16" height="16" viewBox="0 0 16 16">
          <path d="M0 2.3L6.6 1.4V7.6H0ZM7.4 1.3L16 0V7.6H7.4ZM0 8.4H6.6V14.6L0 13.7ZM7.4 8.4H16V16L7.4 14.7Z" fill="#fff" />
        </svg>
      </div>
      <div className="flex w-[344px] shrink-0 items-center bg-[#f3f3f3] pl-[13px] font-['Open_Sans',sans-serif] text-[14px] text-[#3a3a3a]">
        <svg width="16" height="16" viewBox="0 0 16 16" className="shrink-0">
          <circle cx="10" cy="6" r="5" fill="none" stroke="#222" strokeWidth="1.2" />
          <path d="M6.3 9.7L0.8 15.2" stroke="#222" strokeWidth="1.4" />
        </svg>
        <span className="ml-[11px] whitespace-nowrap">Type here to search</span>
        <span className="ml-auto flex"><Scenery /></span>
      </div>
      <div className="flex w-[51px] shrink-0 items-center justify-center">
        <svg width="16" height="15" viewBox="0 0 16 15">
          <path d="M0.5 0V2M11.5 0V2M0.5 1.5H11.5M0.5 4.5H11.5V10.5H0.5ZM0.5 13.5H11.5M0.5 13V15M11.5 13V15" fill="none" stroke="#fff" />
          <rect x="14" y="4" width="2" height="3" fill="#fff" />
          <path d="M15 0V2M15 9V15" stroke="#fff" />
        </svg>
      </div>
      <TaskButton>
        <svg width="24" height="24" viewBox="0 0 24 24">
          <defs>
            <linearGradient id="edgeA" x1="0" y1="0" x2="1" y2="1"><stop offset="0" stopColor="#37c4c8" /><stop offset="1" stopColor="#0c59a4" /></linearGradient>
            <linearGradient id="edgeB" x1="0" y1="0" x2="1" y2="0"><stop offset="0" stopColor="#2fa9df" /><stop offset="1" stopColor="#7fd858" /></linearGradient>
          </defs>
          <circle cx="12" cy="12" r="12" fill="url(#edgeA)" />
          <path d="M2 7C5 1 12 -1 18 2C23 5 25 10 23.5 14C21 16 17 16 15 14.5C17.5 13 17 9 13 8.2C8 7.5 5 10 2 7Z" fill="url(#edgeB)" />
          <path d="M7 15C7 10 12 8 15 10C11 10 10 14 13 17C15 19 19 19 22 18C19 23 13 25 8 22C6 20 7 17 7 15Z" fill="#0a3f86" />
        </svg>
      </TaskButton>
      <TaskButton underline>
        <svg width="22" height="19" viewBox="0 0 22 19">
          <path d="M0 2C0 1 1 0 2 0H8L10 2V6H0Z" fill="#e0a52b" />
          <path d="M0 3H22V17C22 18 21 19 20 19H2C1 19 0 18 0 17Z" fill="#fbd25d" />
          <path d="M7 19V13H15V19H13V15H9V19Z" fill="#3a8fd8" />
        </svg>
      </TaskButton>
      <TaskButton underline>
        <svg width="24" height="24" viewBox="0 0 24 24">
          <path d="M12 12L1.6 6A12 12 0 0 1 22.4 6Z" fill="#dc3b30" />
          <path d="M12 12L22.4 6A12 12 0 0 1 12 24Z" fill="#fbc42d" />
          <path d="M12 12L12 24A12 12 0 0 1 1.6 6Z" fill="#319f4f" />
          <circle cx="12" cy="12" r="5.6" fill="#fff" />
          <circle cx="12" cy="12" r="4.4" fill="#3f83ee" />
        </svg>
      </TaskButton>
      <TaskButton>
        <svg width="23" height="23" viewBox="0 0 23 23">
          <circle cx="11.5" cy="11.5" r="11" fill="#d8541c" />
          <circle cx="13" cy="10" r="7" fill="#3767b2" />
          <path d="M2 6C1 14 7 20 13 20C18 20 22 15 22 10C20 15 15 17 11 15C8 14 7 11 8 8C5 10 3 8 2 6Z" fill="#f39a21" />
          <path d="M9 2C13 0 18 1 21 5C18 3 14 3 11 5Z" fill="#ef7d1c" />
        </svg>
      </TaskButton>
      <TaskButton>
        <svg width="22" height="22" viewBox="0 0 22 22">
          <circle cx="11" cy="11" r="11" fill="#d5d8da" />
          <path d="M2 6C8 0 16 1 20 6C15 3 8 4 5 10Z" fill="#6dad4f" />
          <path d="M10 10C14 8 19 10 20 14C17 12 13 12 12 16C11 19 12 21 12 21C9 18 8 13 10 10Z" fill="#59717d" />
        </svg>
      </TaskButton>
      <TaskButton>
        <svg width="24" height="24" viewBox="0 0 24 24">
          <ellipse cx="11" cy="13" rx="12" ry="5" fill="none" stroke="#f0c020" strokeWidth="1.6" transform="rotate(-38 11 13)" />
          <text x="12" y="20" textAnchor="middle" fontSize="25" fontWeight="700" fontFamily="Liberation Sans" fill="#23a6ea">e</text>
        </svg>
      </TaskButton>
      <TaskButton active>
        <svg width="22" height="22" viewBox="0 0 22 22">
          <path d="M2 0H20V16L22 19L16 22H2Z" fill="#f2f7ef" />
          <rect x="2" y="0" width="18" height="8" fill="#5bb56a" />
          <path d="M13 9H20M13 12H20M13 15H20" stroke="#5bb56a" />
          <text x="7" y="16" textAnchor="middle" fontSize="16" fontWeight="700" fontFamily="Liberation Sans" fill="#17793a">X</text>
        </svg>
      </TaskButton>

      <div className="ml-auto flex items-center pr-[16px] font-['Open_Sans',sans-serif] text-[13.4px]">
        <div className="relative h-[21px] w-[21px] rounded-full bg-gradient-to-br from-[#f9b72a] to-[#ea5a14]">
          <span className="absolute right-[-2px] top-[-2px] h-[6px] w-[6px] rounded-full bg-[#c8261e]" />
        </div>
        <span className="ml-[9px] whitespace-nowrap">26°C</span>
        <span className="ml-[9px] whitespace-nowrap">Sunny</span>
        <svg width="11" height="6" viewBox="0 0 11 6" className="ml-[17px]"><path d="M0.5 5.5L5.5 0.5L10.5 5.5" fill="none" stroke="#fff" /></svg>
        <svg width="18" height="15" viewBox="0 0 18 15" className="ml-[11px]">
          <path d="M2.5 0.5H17.5V10.5H0.5V3M9 10.5V14M5 14.5H13" fill="none" stroke="#fff" />
          <rect x="0.5" y="0.5" width="3" height="3" fill="#1a2a3e" stroke="#fff" />
        </svg>
        <svg width="16" height="13" viewBox="0 0 16 13" className="ml-[6px]">
          <path d="M0.5 4.5H3L7 1V12L3 8.5H0.5Z" fill="none" stroke="#fff" />
          <path d="M9.5 4C10.5 5.5 10.5 7.5 9.5 9M12 2.5C14 5 14 8 12 10.5M14 1C16.5 4.5 16.5 8.5 14 12" fill="none" stroke="#fff" />
        </svg>
        <div className="ml-[12px] flex w-[50px] flex-col items-center whitespace-nowrap text-[12px] leading-[19px]">
          <span>12:14 PM</span>
          <span>19-Jan-23</span>
        </div>
        <div className="relative ml-[19px] h-[26px] w-[25px]">
          <svg width="17" height="15" viewBox="0 0 17 15" className="mt-[2px]">
            <path d="M0 0H17V11H6L3 14V11H0Z" fill="#fff" />
            <path d="M3 3H14M3 6H14M3 8.5H10" stroke="#1a2a3e" />
          </svg>
          <span className="absolute right-[0px] top-[9px] flex h-[17px] w-[17px] items-center justify-center rounded-full border border-[#9aa0a6] bg-[#2a3442] text-[12px] leading-[12px]">10</span>
        </div>
      </div>
    </div>
  );
}

export default function App() {
  return (
    <div className="relative flex h-[768px] w-[1366px] flex-col overflow-hidden bg-white font-['DejaVu_Sans_Condensed','Noto_Sans',sans-serif] text-[11.5px]">
      <TitleBar />
      <MenuTabs />
      <Ribbon />
      <FormulaBar />
      <Sheet />
      <SheetTabs />
      <StatusBar />
      <Taskbar />
      <div className="pointer-events-none absolute left-[1073px] top-[650px] whitespace-nowrap font-['Open_Sans',sans-serif] text-[#7d7d7d]/60">
        <div className="text-[19px] leading-[24px]">Activate Windows</div>
        <div className="mt-[2px] text-[14.5px] leading-[20px]">Go to Settings to activate Windows.</div>
      </div>
    </div>
  );
}
